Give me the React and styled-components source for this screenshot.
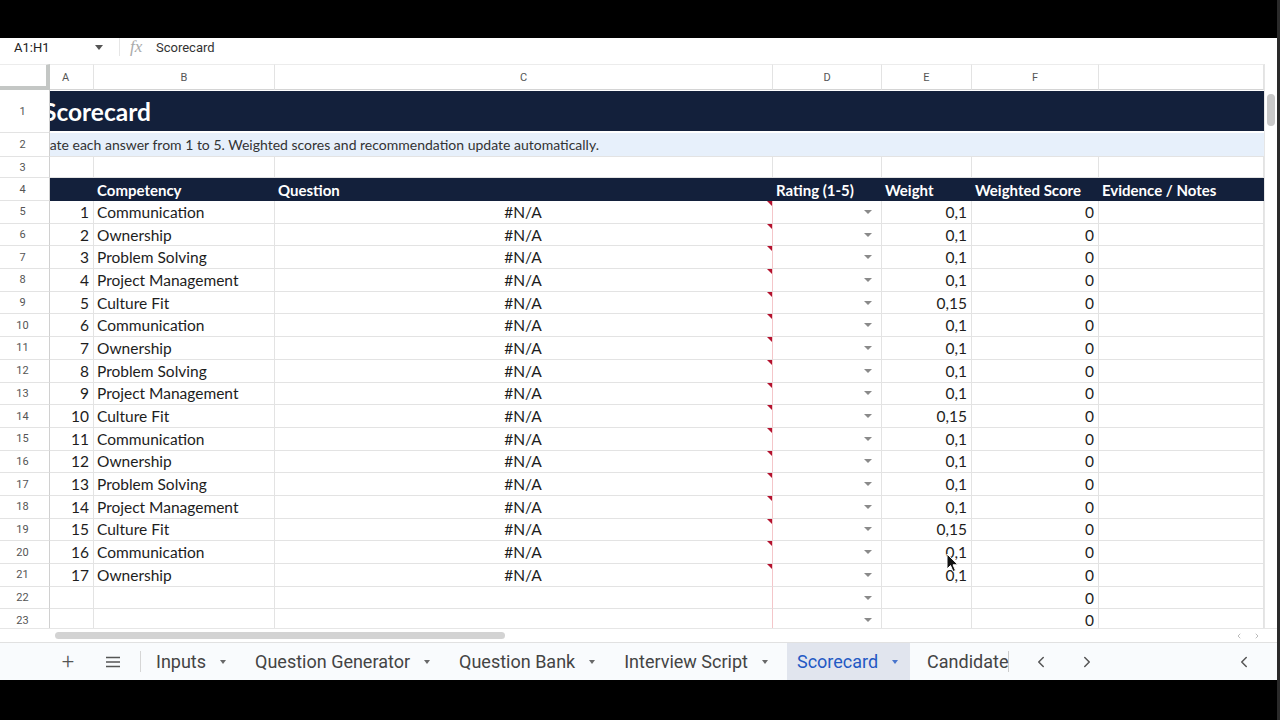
import React from 'react';
import styled, { createGlobalStyle } from 'styled-components';
import { ChevronLeft, ChevronRight } from 'lucide-react';

const GlobalStyle = createGlobalStyle`
  html, body {
    margin: 0;
    padding: 0;
    background: #000;
  }
  body {
    font-family: Lato, 'Liberation Sans', sans-serif;
  }
`;

const COLS = '50px 44px 181px 498px 109px 90px 127px 165px';
const NAVY = '#13203b';
const GRID = '#e3e3e3';

const competencies = [
  'Communication',
  'Ownership',
  'Problem Solving',
  'Project Management',
  'Culture Fit',
];

const rows = Array.from({ length: 17 }, (_, i) => {
  const name = competencies[i % 5];
  return {
    n: i + 1,
    name,
    weight: name === 'Culture Fit' ? '0,15' : '0,1',
  };
});

const tabs = ['Inputs', 'Question Generator', 'Question Bank', 'Interview Script', 'Scorecard'];

export default function App() {
  return (
    <>
      <GlobalStyle />
      <Screen>
        <TopBlack />
        <FormulaBar>
          <NameBox>
            A1:H1
            <SmallCaret />
          </NameBox>
          <Fx>fx</Fx>
          <FormulaText>Scorecard</FormulaText>
        </FormulaBar>

        <SheetArea>
          <Grid>
            <Row h={26}>
              <Corner />
              {['A', 'B', 'C', 'D', 'E', 'F', ''].map((l, i) => (
                <ColHead key={i} nudge={l === 'A' ? 12 : 0}>
                  {l}
                </ColHead>
              ))}
            </Row>

            <Row h={43}>
              <RowHead>1</RowHead>
              <TitleCell>
                <span>Scorecard</span>
              </TitleCell>
            </Row>

            <Row h={24}>
              <RowHead>2</RowHead>
              <NoteCell>
                <span>Rate each answer from 1 to 5. Weighted scores and recommendation update automatically.</span>
              </NoteCell>
            </Row>

            <Row h={21}>
              <RowHead>3</RowHead>
              <Cell />
              <Cell />
              <Cell />
              <Cell />
              <Cell />
              <Cell />
              <Cell />
            </Row>

            <Row h={23}>
              <RowHead>4</RowHead>
              <HeadCell />
              <HeadCell>Competency</HeadCell>
              <HeadCell>Question</HeadCell>
              <HeadCell>Rating (1-5)</HeadCell>
              <HeadCell>Weight</HeadCell>
              <HeadCell>Weighted Score</HeadCell>
              <HeadCell>Evidence / Notes</HeadCell>
            </Row>

            {rows.map((r, i) => (
              <Row h={22.7} key={r.n}>
                <RowHead>{i + 5}</RowHead>
                <Cell align="right">{r.n}</Cell>
                <Cell>{r.name}</Cell>
                <Cell align="center" flagged>
                  #N/A
                </Cell>
                <Cell pink align="right">
                  <DropArrow />
                </Cell>
                <Cell align="right">{r.weight}</Cell>
                <Cell align="right">0</Cell>
                <Cell />
              </Row>
            ))}

            {[22, 23].map((n) => (
              <Row h={22.7} key={n}>
                <RowHead>{n}</RowHead>
                <Cell />
                <Cell />
                <Cell />
                <Cell pink align="right">
                  <DropArrow />
                </Cell>
                <Cell />
                <Cell align="right">0</Cell>
                <Cell />
              </Row>
            ))}

            <Cursor width="14" height="20" viewBox="0 0 14 20">
              <path d="M1 1 L1 16 L4.5 12.5 L7 18.5 L9.5 17.5 L7 11.8 L12 11.8 Z" fill="#111" stroke="#fff" strokeWidth="1" />
            </Cursor>
          </Grid>
          <VScroll>
            <VThumb />
          </VScroll>
        </SheetArea>

        <HScrollBar>
          <HThumb />
          <HArrows>
            <ChevronLeft size={8} strokeWidth={2} />
            <ChevronRight size={8} strokeWidth={2} />
          </HArrows>
        </HScrollBar>

        <TabBar>
          <TabIcon>+</TabIcon>
          <TabIcon>
            <svg width="16" height="12" viewBox="0 0 16 12">
              <path d="M1 1.5h14M1 6h14M1 10.5h14" stroke="#555" strokeWidth="1.6" />
            </svg>
          </TabIcon>
          <TabDivider />
          {tabs.map((t) => (
            <Tab key={t} active={t === 'Scorecard'}>
              {t}
              <TabCaret />
            </Tab>
          ))}
          <Tab clipped>Candidate</Tab>
          <NavArrow>
            <ChevronLeft size={18} strokeWidth={2} />
          </NavArrow>
          <NavArrow>
            <ChevronRight size={18} strokeWidth={2} />
          </NavArrow>
          <Spacer />
          <NavArrow edge>
            <ChevronLeft size={18} strokeWidth={2} />
          </NavArrow>
        </TabBar>
        <BottomBlack />
      </Screen>
    </>
  );
}

const Screen = styled.div`
  width: 1280px;
  height: 720px;
  display: flex;
  flex-direction: column;
  background: #fff;
  overflow: hidden;
  position: relative;
  border-right: 3px solid #2a2a2a;
  box-sizing: border-box;
`;

const TopBlack = styled.div`
  height: 38px;
  background: #000;
  flex-shrink: 0;
`;

const BottomBlack = styled.div`
  height: 40px;
  background: #000;
  flex-shrink: 0;
`;

const FormulaBar = styled.div`
  height: 26px;
  display: flex;
  align-items: center;
  padding-bottom: 8px;
  box-sizing: border-box;
  font-family: Roboto, 'Liberation Sans', sans-serif;
  font-size: 13px;
  color: #222;
  background: #fff;
  flex-shrink: 0;
`;

const NameBox = styled.div`
  width: 120px;
  box-sizing: border-box;
  padding: 0 16px 0 14px;
  display: flex;
  align-items: center;
  justify-content: space-between;
  border-right: 1px solid #e6e6e6;
  height: 18px;
`;

const SmallCaret = styled.span`
  width: 0;
  height: 0;
  border-left: 4px solid transparent;
  border-right: 4px solid transparent;
  border-top: 5px solid #555;
`;

const Fx = styled.span`
  margin-left: 10px;
  font-family: 'Liberation Serif', serif;
  font-style: italic;
  font-size: 17px;
  color: #aaa;
  width: 26px;
`;

const FormulaText = styled.span`
  color: #333;
`;

const SheetArea = styled.div`
  display: flex;
  height: 564px;
  flex-shrink: 0;
`;

const Grid = styled.div`
  flex: 1;
  position: relative;
  overflow: hidden;
  display: flex;
  flex-direction: column;
`;

const Row = styled.div`
  display: grid;
  grid-template-columns: ${COLS};
  height: ${(p) => p.h}px;
  flex-shrink: 0;
`;

const Corner = styled.div`
  background: #fff;
  border-right: 4px solid #c4c7c5;
  border-bottom: 4px solid #c4c7c5;
  border-top: 1px solid #ececec;
  box-sizing: border-box;
`;

const ColHead = styled.div`
  background: #fff;
  border-right: 1px solid ${GRID};
  border-bottom: 1px solid #d4d4d4;
  border-top: 1px solid #ececec;
  box-sizing: border-box;
  display: flex;
  align-items: center;
  justify-content: center;
  font-family: Roboto, 'Liberation Sans', sans-serif;
  font-size: 11px;
  color: #555;
  padding-right: ${(p) => p.nudge}px;
`;

const RowHead = styled.div`
  background: #fff;
  border-right: 1px solid #d0d0d0;
  border-bottom: 1px solid ${GRID};
  box-sizing: border-box;
  display: flex;
  align-items: center;
  justify-content: center;
  padding-right: 4px;
  font-family: Roboto, 'Liberation Sans', sans-serif;
  font-size: 11px;
  color: #555;
`;

const Cell = styled.div`
  position: relative;
  border-right: 1px solid ${GRID};
  border-bottom: 1px solid ${GRID};
  border-left: ${(p) => (p.pink ? '1px solid #f4c6c9' : 'none')};
  margin-left: ${(p) => (p.pink ? '-1px' : '0')};
  box-sizing: border-box;
  display: flex;
  align-items: center;
  justify-content: ${(p) =>
    p.align === 'right' ? 'flex-end' : p.align === 'center' ? 'center' : 'flex-start'};
  padding: 0 4px 0 3px;
  font-size: 15.5px;
  color: #1d1d1d;
  white-space: nowrap;

  ${(p) =>
    p.flagged &&
    `
    &::after {
      content: '';
      position: absolute;
      top: 0;
      right: -1px;
      border-top: 6px solid #b3122e;
      border-left: 6px solid transparent;
    }
  `}
`;

const DropArrow = styled.span`
  width: 0;
  height: 0;
  margin-right: 5px;
  border-left: 4px solid transparent;
  border-right: 4px solid transparent;
  border-top: 4px solid #8a8a8a;
`;

const TitleCell = styled.div`
  grid-column: 2 / 9;
  background: ${NAVY};
  margin: 1px 0 2px;
  display: flex;
  align-items: center;
  overflow: hidden;
  white-space: nowrap;
  font-weight: 700;
  font-size: 24.5px;
  color: #fff;

  span {
    margin-left: -7px;
  }
`;

const NoteCell = styled.div`
  grid-column: 2 / 9;
  background: #e7f0fb;
  border-bottom: 1px solid ${GRID};
  box-sizing: border-box;
  display: flex;
  align-items: center;
  overflow: hidden;
  white-space: nowrap;
  font-size: 14px;
  color: #333;

  span {
    margin-left: -9px;
  }
`;

const HeadCell = styled.div`
  background: ${NAVY};
  display: flex;
  align-items: center;
  padding-left: 3px;
  font-weight: 700;
  font-size: 15px;
  color: #fff;
  white-space: nowrap;
`;

const Cursor = styled.svg`
  position: absolute;
  left: 946px;
  top: 489px;
`;

const VScroll = styled.div`
  width: 13px;
  background: #fff;
  border-left: 1px solid #e6e6e6;
  box-sizing: border-box;
  display: flex;
  justify-content: center;
`;

const VThumb = styled.div`
  width: 8px;
  height: 32px;
  margin-top: 30px;
  border-radius: 4px;
  background: #c8c8c8;
`;

const HScrollBar = styled.div`
  height: 14px;
  flex-shrink: 0;
  display: flex;
  align-items: center;
  border-top: 1px solid #e6e6e6;
  box-sizing: border-box;
  padding-left: 55px;
  background: #fff;
`;

const HThumb = styled.div`
  width: 450px;
  height: 7px;
  border-radius: 4px;
  background: #d3d3d3;
`;

const HArrows = styled.div`
  margin-left: auto;
  margin-right: 16px;
  display: flex;
  gap: 10px;
  color: #999;
`;

const TabBar = styled.div`
  height: 38px;
  flex-shrink: 0;
  display: flex;
  align-items: stretch;
  background: #f9fbfd;
  border-top: 1px solid #e1e1e1;
  box-sizing: border-box;
  padding-left: 54px;
  font-family: Roboto, 'Liberation Sans', sans-serif;
  font-size: 18px;
  color: #444;
`;

const TabIcon = styled.div`
  width: 28px;
  margin-right: 17px;
  display: flex;
  align-items: center;
  justify-content: center;
  font-size: 22px;
  font-weight: 300;
  color: #555;
`;

const TabDivider = styled.div`
  width: 1px;
  background: #d6d6d6;
  margin: 8px 5px 8px -4px;
`;

const Tab = styled.div`
  display: flex;
  align-items: center;
  padding: ${(p) => (p.clipped ? '0 0 0 10px' : '0 12px 0 10px')};
  margin-right: 7px;
  background: ${(p) => (p.active ? '#e1e5ee' : 'transparent')};
  color: ${(p) => (p.active ? '#2359c4' : '#444')};
  white-space: nowrap;
  border-right: ${(p) => (p.clipped ? '1px solid #ccc' : 'none')};
  margin-top: ${(p) => (p.clipped ? '8px' : '0')};
  margin-bottom: ${(p) => (p.clipped ? '8px' : '0')};
`;

const TabCaret = styled.span`
  width: 0;
  height: 0;
  margin-left: 14px;
  border-left: 3.5px solid transparent;
  border-right: 3.5px solid transparent;
  border-top: 4px solid currentColor;
  opacity: 0.8;
`;

const NavArrow = styled.div`
  display: flex;
  align-items: center;
  justify-content: center;
  width: 42px;
  color: #555;
  margin-left: ${(p) => (p.edge ? '0' : '4px')};
  margin-right: ${(p) => (p.edge ? '12px' : '0')};
`;

const Spacer = styled.div`
  flex: 1;
`;
